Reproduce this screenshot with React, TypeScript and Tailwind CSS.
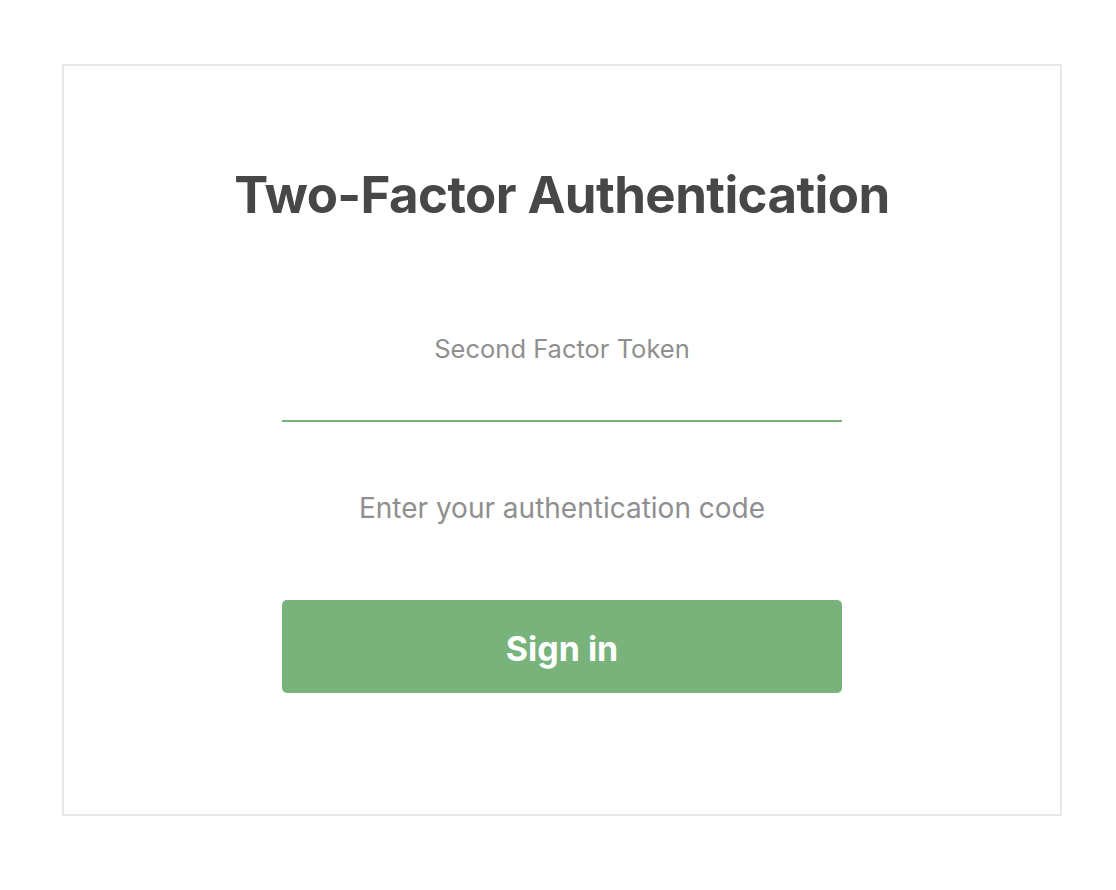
export default function App() {
  return (
    <div className="min-h-screen bg-white px-[62px] pt-[64px] font-['Inter',sans-serif]">
      <div className="w-[1000px] h-[752px] border-2 border-[#e8e8e8] flex flex-col items-center">
        <h1 className="mt-[98px] text-[51px] leading-[62px] font-bold text-[#474747] tracking-[-0.6px]">
          Two-Factor Authentication
        </h1>
        <div className="mt-[108px] w-[560px] flex flex-col items-center">
          <label className="text-[25.5px] leading-[30px] text-[#8f8f8f]">Second Factor Token</label>
          <input
            type="text"
            className="mt-[26px] w-full h-[32px] border-b-2 border-[#78b37b] outline-none text-center text-[24px] text-[#474747]"
          />
          <p className="mt-[69px] text-[28px] leading-[34px] text-[#8f8f8f]">Enter your authentication code</p>
          <button className="mt-[75px] w-full h-[93px] pt-[3px] rounded-[5px] bg-[#78b37b] text-white text-[34px] font-bold">
            Sign in
          </button>
        </div>
      </div>
    </div>
  );
}
